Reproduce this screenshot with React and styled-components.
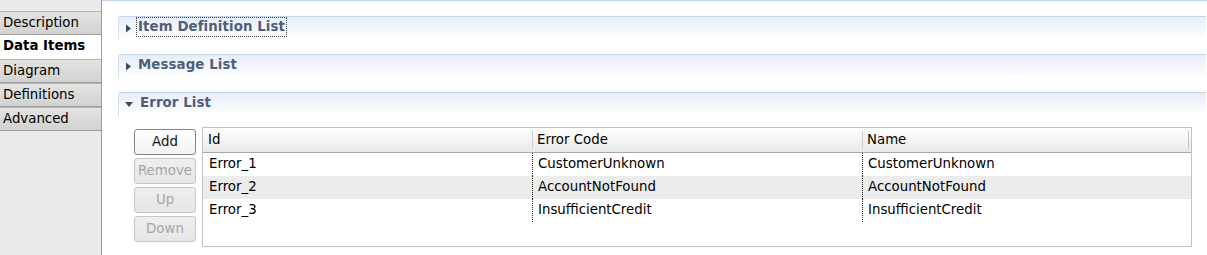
import React from "react";
import styled, { createGlobalStyle } from "styled-components";

const Global = createGlobalStyle`
  html, body { margin: 0; padding: 0; background: #fff; }
  body { font-family: "DejaVu Sans", "Liberation Sans", sans-serif; font-size: 13.33px; color: #000; }
`;

const Page = styled.div`
  display: flex;
  width: 1207px;
  height: 255px;
  overflow: hidden;
  background: #fff;
`;

const Sidebar = styled.div`
  width: 101px;
  flex: none;
  background: #ebebea;
  border-right: 1px solid #9c9c9c;
  padding-top: 11px;
  display: flex;
  flex-direction: column;
`;

const Tab = styled.div`
  height: ${(p) => (p.$active ? "24px" : "22px")};
  line-height: ${(p) => (p.$active ? "22px" : "21px")};
  padding-left: 3px;
  font-weight: ${(p) => (p.$active ? "bold" : "normal")};
  background: ${(p) =>
    p.$active ? "#ffffff" : "linear-gradient(#e3e3e2, #d2d2d1)"};
  border-top: ${(p) => (p.$active ? "none" : "1px solid #b4b4b4")};
  border-bottom: ${(p) => (p.$active ? "none" : "1px solid #9f9f9f")};
  white-space: nowrap;
`;

const Main = styled.div`
  flex: 1;
  border-top: 1px solid #c6d6ea;
  padding: 15px 1px 0 16px;
  display: flex;
  flex-direction: column;
  gap: 14px;
`;

const Section = styled.div`
  display: flex;
  flex-direction: column;
`;

const Header = styled.div`
  height: 22px;
  border-top: 1px solid #c3d3e9;
  border-left: 1px solid #d6e1ef;
  border-top-left-radius: 3px;
  background: linear-gradient(#e7edf7, #ffffff 95%);
  display: flex;
  align-items: flex-start;
  padding: 1px 0 0 7px;
  gap: 6px;
`;

const Arrow = styled.svg`
  margin-top: ${(p) => (p.$down ? "8px" : "6px")};
  margin-left: ${(p) => (p.$down ? "-1px" : "0")};
  flex: none;
`;

const Title = styled.span`
  font-weight: bold;
  font-size: 13.33px;
  line-height: 18px;
  color: #4f5e7a;
  padding: 0 1px;
  outline: ${(p) => (p.$focused ? "1px dotted #444" : "none")};
  letter-spacing: 0.1px;
`;

const Body = styled.div`
  display: flex;
  gap: 6px;
  padding: 11px 14px 0 16px;
`;

const Buttons = styled.div`
  display: flex;
  flex-direction: column;
  gap: 3px;
  padding-top: 2px;
`;

const Button = styled.div`
  width: 60px;
  height: 24px;
  line-height: 24px;
  text-align: center;
  border-radius: 3px;
  border: 1px solid ${(p) => (p.$disabled ? "#c6c6c6" : "#858585")};
  color: ${(p) => (p.$disabled ? "#a6a6a6" : "#111")};
  background: ${(p) =>
    p.$disabled
      ? "linear-gradient(#efefef, #e6e6e6)"
      : "linear-gradient(#ffffff, #f3f3f3)"};
`;

const Table = styled.div`
  flex: 1;
  height: 118px;
  border: 1px solid #c2c2c2;
  display: flex;
  flex-direction: column;
`;

const Row = styled.div`
  display: grid;
  grid-template-columns: 329px 330px 1fr;
  height: 23px;
  background: ${(p) => (p.$alt ? "#ececec" : "transparent")};
`;

const HeadRow = styled(Row)`
  height: 24px;
  background: linear-gradient(#ffffff, #e9e9e8);
  border-bottom: 1px solid #a9a9a9;
`;

const HeadCell = styled.div`
  padding-left: 5px;
  line-height: 24px;
  white-space: nowrap;
  background: ${(p) =>
    p.$sep
      ? "linear-gradient(#cfcfcf, #cfcfcf) no-repeat left 0 top 3px / 1px 18px"
      : "none"};
`;

const HeadEnd = styled.div`
  display: flex;
  justify-content: space-between;
  padding-left: 5px;
  padding-right: 2px;
  line-height: 24px;
  background: linear-gradient(#cfcfcf, #cfcfcf) no-repeat left 0 top 3px / 1px 18px;
  &::after {
    content: "";
    width: 1px;
    height: 18px;
    margin-top: 3px;
    background: #c4c4c4;
  }
`;

const Cell = styled.div`
  padding-left: ${(p) => (p.$sep ? "5px" : "6px")};
  line-height: 22px;
  white-space: nowrap;
  border-left: ${(p) => (p.$sep ? "1px dotted #222" : "none")};
`;

const RightArrow = () => (
  <Arrow width="5" height="9" viewBox="0 0 5 9">
    <path d="M0 0.5 L5 4.5 L0 8.5 Z" fill="#3e4b63" />
  </Arrow>
);

const DownArrow = () => (
  <Arrow $down width="8" height="5" viewBox="0 0 8 5">
    <path d="M0 0 L8 0 L4 5 Z" fill="#3e4b63" />
  </Arrow>
);

const rows = [
  ["Error_1", "CustomerUnknown", "CustomerUnknown"],
  ["Error_2", "AccountNotFound", "AccountNotFound"],
  ["Error_3", "InsufficientCredit", "InsufficientCredit"],
];

export default function App() {
  return (
    <>
      <Global />
      <Page>
        <Sidebar>
          <Tab>Description</Tab>
          <Tab $active>Data Items</Tab>
          <Tab>Diagram</Tab>
          <Tab>Definitions</Tab>
          <Tab>Advanced</Tab>
        </Sidebar>
        <Main>
          <Section>
            <Header>
              <RightArrow />
              <Title $focused>Item Definition List</Title>
            </Header>
          </Section>
          <Section>
            <Header>
              <RightArrow />
              <Title>Message List</Title>
            </Header>
          </Section>
          <Section>
            <Header>
              <DownArrow />
              <Title>Error List</Title>
            </Header>
            <Body>
              <Buttons>
                <Button>Add</Button>
                <Button $disabled>Remove</Button>
                <Button $disabled>Up</Button>
                <Button $disabled>Down</Button>
              </Buttons>
              <Table>
                <HeadRow>
                  <HeadCell>Id</HeadCell>
                  <HeadCell $sep>Error Code</HeadCell>
                  <HeadEnd>Name</HeadEnd>
                </HeadRow>
                {rows.map((r, i) => (
                  <Row key={r[0]} $alt={i === 1}>
                    <Cell>{r[0]}</Cell>
                    <Cell $sep>{r[1]}</Cell>
                    <Cell $sep>{r[2]}</Cell>
                  </Row>
                ))}
              </Table>
            </Body>
          </Section>
        </Main>
      </Page>
    </>
  );
}
